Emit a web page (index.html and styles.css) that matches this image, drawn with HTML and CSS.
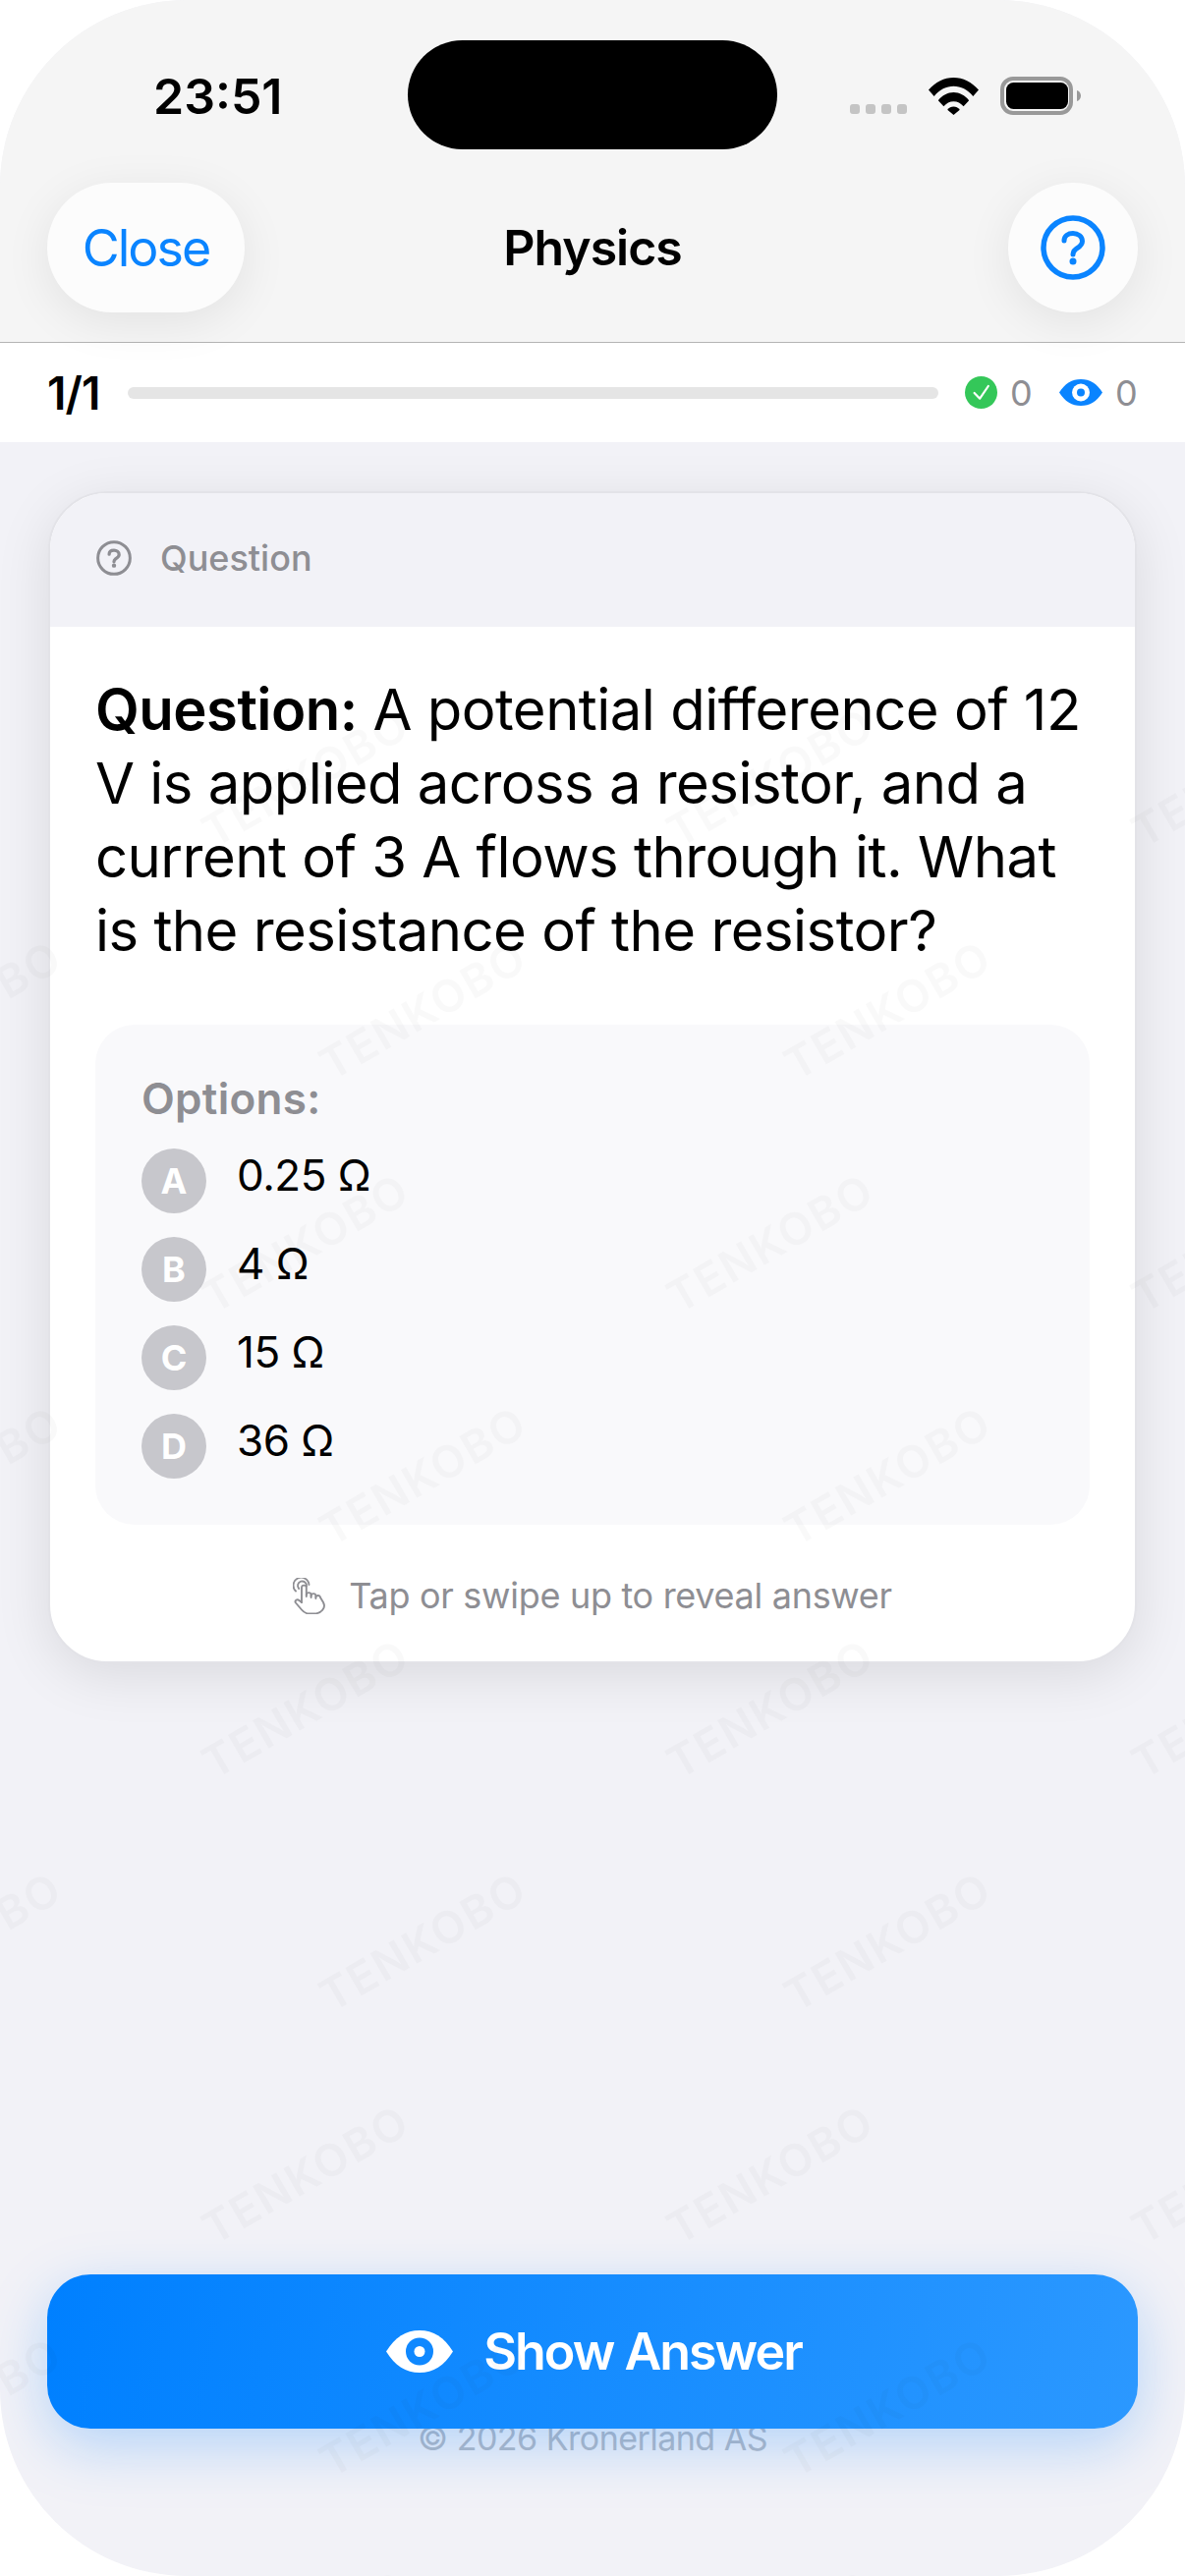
FILE: index.html
```html
<!DOCTYPE html>
<html lang="en">
<head>
    <meta charset="UTF-8">
    <meta name="viewport" content="width=device-width, initial-scale=1.0">
    <title>Physics</title>
    <link rel="stylesheet" href="styles.css">
</head>
<body>

<div class="phone">
    <header class="nav">
        <div class="status-bar">
            <span class="time">23:51</span>
            <div class="island"></div>
            <div class="status-icons">
                <div class="signal"><i></i><i></i><i></i><i></i></div>
                <svg class="wifi" viewBox="0 0 51 38">
                    <path d="M0 12.5C7 4.5 16 0 25.5 0S44 4.5 51 12.5L45.3 19C39.7 12.3 33 8.8 25.5 8.8S11.300 12.3 5.700 19Z"/>
                    <path d="M9.800 23.200C14 18 19.500 15 25.500 15S37 18 41.200 23.200L35.600 29.300C32.800 26 29.500 24.200 25.500 24.200S18.200 26 15.400 29.300Z"/>
                    <path d="M19.200 32.800C21 30.600 23 29.500 25.500 29.500S30 30.600 31.800 32.800L25.500 38Z"/>
                </svg>
                <svg class="battery" viewBox="0 0 82 39">
                    <rect x="2" y="2" width="70" height="35" rx="11" fill="none" stroke="#999" stroke-width="4"/>
                    <rect x="6" y="6" width="63" height="27" rx="7.500" fill="#000"/>
                    <path d="M78 14c2.500.8 4 3 4 5.500S80.500 24.200 78 25Z" fill="#999"/>
                </svg>
            </div>
        </div>
        <div class="nav-row">
            <button class="nav-btn close-btn">Close</button>
            <h1 class="nav-title">Physics</h1>
            <button class="nav-btn help-btn">
                <svg class="q-icon help-icon" viewBox="0 0 66 66">
                    <circle cx="33" cy="33" r="30" fill="none" stroke="currentColor" stroke-width="5.500"/>
                    <path d="M24 26C24 21 28 18.500 33 18.500S42.500 21.500 42.500 26.500C42.500 31 39 32.500 36 34.500C34 36 33 37.500 33 40" fill="none" stroke="currentColor" stroke-width="5" stroke-linecap="round"/>
                    <circle cx="33" cy="47" r="3.500" fill="currentColor"/>
                </svg>
            </button>
        </div>
    </header>

    <div class="progress-row">
        <span class="progress-count">1/1</span>
        <div class="progress-bar"></div>
        <div class="stats">
            <svg class="check-icon" viewBox="0 0 33 33">
                <circle cx="16.500" cy="16.500" r="16.500" fill="#34c759"/>
                <path d="M9.600 17L15.200 22.700L23.800 10" fill="none" stroke="#fff" stroke-width="2.200" stroke-linecap="round" stroke-linejoin="round"/>
            </svg>
            <span class="stat-num">0</span>
            <svg class="stat-eye" viewBox="0 0 44 27">
                <path d="M0 13.500C6 4 13 0 22 0S38 4 44 13.500C38 23 31 27 22 27S6 23 0 13.500Z" fill="#0a84ff"/>
                <circle cx="22" cy="13.500" r="9" fill="#fff"/>
                <circle cx="22" cy="13.500" r="4" fill="#0a84ff"/>
            </svg>
            <span class="stat-num">0</span>
        </div>
    </div>

    <main class="content">
        <section class="card">
            <div class="card-header">
                <svg class="q-icon header-icon" viewBox="0 0 66 66">
                    <circle cx="33" cy="33" r="30" fill="none" stroke="currentColor" stroke-width="5.500"/>
                    <path d="M24 26C24 21 28 18.500 33 18.500S42.500 21.500 42.500 26.500C42.500 31 39 32.500 36 34.500C34 36 33 37.500 33 40" fill="none" stroke="currentColor" stroke-width="6" stroke-linecap="round"/>
                    <circle cx="33" cy="47" r="4" fill="currentColor"/>
                </svg>
                <span>Question</span>
            </div>
            <div class="card-body">
                <p class="question"><strong>Question:</strong> A potential difference of 12 V is applied across a resistor, and a current of 3 A flows through it. What is the resistance of the resistor?</p>
                <div class="options">
                    <div class="options-label">Options:</div>
                    <div class="option"><span class="badge">A</span><span class="option-text">0.25 Ω</span></div>
                    <div class="option"><span class="badge">B</span><span class="option-text">4 Ω</span></div>
                    <div class="option"><span class="badge">C</span><span class="option-text">15 Ω</span></div>
                    <div class="option"><span class="badge">D</span><span class="option-text">36 Ω</span></div>
                </div>
                <div class="hint">
                    <svg class="hand-icon" viewBox="0 0 33 37">
                        <path d="M3 13.500A8 8 0 1 1 16.500 7"/>
                        <path d="M6.200 11A4.500 4.500 0 1 1 14 8.500"/>
                        <path d="M9 25V10a2.400 2.400 0 0 1 4.800 0V19"/>
                        <path d="M13.800 17.500a2.400 2.400 0 0 1 4.800 0V20"/>
                        <path d="M18.600 18.500a2.400 2.400 0 0 1 4.800 0V21"/>
                        <path d="M23.400 19.500a2.400 2.400 0 0 1 4.600 .5L31 25C32.500 28 32 31 30 33C28 35.500 25 36.500 21 36.500H17C13.500 36.500 11 35 9 32.500L3 25.500C1.500 23.500 4.200 21 6.500 23L9 25"/>
                    </svg>
                    <span>Tap or swipe up to reveal answer</span>
                </div>
            </div>
        </section>

        <div class="footer">
            <button class="show-btn">
                <svg class="show-eye" viewBox="0 0 68 43">
                    <path d="M0 21.500C9 7 20 0 34 0S59 7 68 21.500C59 36 48 43 34 43S9 36 0 21.500Z" fill="#fff"/>
                    <circle cx="34" cy="21.500" r="14" fill="#0f88ff"/>
                    <circle cx="34" cy="21.500" r="5.500" fill="#fff"/>
                </svg>
                <span>Show Answer</span>
            </button>
            <div class="copyright">© 2026 Kronerland AS</div>
        </div>
    </main>

    <!-- marca de agua repetida -->
    <svg class="watermark">
        <defs>
            <pattern id="wm" x="150" y="-188" width="473" height="474" patternUnits="userSpaceOnUse">
                <text x="161" y="341" transform="rotate(-30 161 341)">TENKOBO</text>
                <text x="280.500" y="104" transform="rotate(-30 280.500 104)">TENKOBO</text>
            </pattern>
        </defs>
        <rect width="100%" height="100%" fill="url(#wm)"/>
    </svg>
</div>

</body>
</html>
```

FILE: styles.css
```css
* {
    box-sizing: border-box;
}
html, body {
    margin: 0;
    background-color: #fff;
}
body {
    font-family: Inter, "Liberation Sans", sans-serif;
    color: #000;
}
button {
    font-family: inherit;
    border: none;
    padding: 0;
}
.phone {
    position: relative;
    width: 1206px;
    height: 2622px;
    display: flex;
    flex-direction: column;
    background-color: #f2f2f7;
    border-radius: 190px;
    overflow: hidden;
}

/* nav */
.nav {
    position: relative;
    z-index: 1;
    height: 349px;
    padding-top: 41px;
    background-color: #f5f5f5;
    border-bottom: 1px solid #b4b4b4;
}
.status-bar {
    display: flex;
    align-items: center;
    height: 111px;
    padding-left: 156px;
}
.time {
    width: 259px;
    font-size: 50px;
    font-weight: 600;
    line-height: 60px;
    padding-top: 3px;
}
.island {
    width: 376px;
    height: 111px;
    background-color: #000;
    border-radius: 56px;
}
.status-icons {
    display: flex;
    align-items: flex-end;
    margin-left: 74px;
    height: 40px;
    margin-top: 2px;
}
.signal {
    display: flex;
    gap: 6px;
    margin-right: 22px;
    margin-bottom: 2px;
}
.signal i {
    width: 10px;
    height: 10px;
    border-radius: 3px;
    background-color: #c4c4c4;
}
.wifi {
    width: 51px;
    height: 38px;
    margin-right: 22px;
    margin-bottom: 1px;
}
.battery {
    width: 82px;
    height: 39px;
    margin-bottom: 1px;
}
.nav-row {
    display: grid;
    grid-template-columns: 1fr auto 1fr;
    align-items: center;
    height: 132px;
    margin-top: 34px;
    padding: 0 48px;
}
.nav-btn {
    height: 132px;
    border-radius: 66px;
    background-color: #fcfcfc;
    box-shadow: 0 10px 48px rgba(0, 0, 0, 0.08);
    color: #0a84ff;
}
.close-btn {
    width: 201px;
    font-size: 52px;
    letter-spacing: -2px;
    justify-self: start;
}
.help-btn {
    width: 132px;
    justify-self: end;
    display: flex;
    align-items: center;
    justify-content: center;
}
.help-icon {
    width: 66px;
    height: 66px;
}
.nav-title {
    margin: 0;
    font-size: 50px;
    font-weight: 600;
    letter-spacing: -1px;
}

/* progress */
.progress-row {
    display: flex;
    align-items: center;
    height: 101px;
    padding-left: 48px;
    background-color: #fff;
}
.progress-count {
    width: 82px;
    font-size: 46px;
    font-weight: 600;
    letter-spacing: -1px;
}
.progress-bar {
    flex: none;
    width: 825px;
    height: 12px;
    border-radius: 6px;
    background-color: #e5e5e5;
}
.stats {
    display: flex;
    align-items: center;
    margin-left: 27px;
}
.check-icon {
    width: 33px;
    height: 33px;
}
.stat-num {
    width: 22px;
    margin-left: 13px;
    font-size: 36px;
    color: #8e8e93;
}
.stat-eye {
    width: 44px;
    height: 27px;
    margin-left: 28px;
}

/* card */
.content {
    flex: 1;
    display: flex;
    flex-direction: column;
    padding: 50px 48px 120px;
}
.card {
    margin: 0 1px;
    background-color: #fff;
    border: 2px solid #e3e3e8;
    border-radius: 60px;
    overflow: hidden;
    box-shadow: 0 12px 56px rgba(0, 0, 0, 0.1);
}
.card-header {
    display: flex;
    align-items: center;
    gap: 29px;
    height: 136px;
    padding: 0 47px 4px;
    background-color: #f2f2f7;
    font-size: 36px;
    font-weight: 500;
    color: #8e8e93;
}
.q-icon {
    display: block;
}
.header-icon {
    width: 36px;
    height: 36px;
}
.card-body {
    padding: 47px 46px 47px;
}
.question {
    margin: 0;
    font-size: 58px;
    line-height: 75px;
    letter-spacing: -0.530px;
}
.question strong {
    font-weight: 600;
}
.options {
    margin-top: 58px;
    padding: 50px 47px 47px;
    background-color: #f9f9fb;
    border-radius: 40px;
}
.options-label {
    margin-bottom: 26px;
    font-size: 44px;
    font-weight: 600;
    line-height: 50px;
    letter-spacing: 0.300px;
    color: #8e8e93;
}
.option {
    display: flex;
    align-items: center;
    gap: 31px;
    margin-bottom: 24px;
}
.option:last-child {
    margin-bottom: 0;
}
.badge {
    width: 66px;
    height: 66px;
    display: flex;
    align-items: center;
    justify-content: center;
    border-radius: 50%;
    background-color: #c7c7cc;
    color: #fff;
    font-size: 36px;
    font-weight: 700;
}
.option-text {
    margin-bottom: 12px;
    font-size: 44px;
    line-height: 54px;
    letter-spacing: -0.500px;
}
.hint {
    display: flex;
    align-items: center;
    justify-content: center;
    gap: 24px;
    margin-top: 52px;
    height: 40px;
    font-size: 36px;
    letter-spacing: -0.300px;
    color: #8e8e93;
}
.hand-icon {
    width: 33px;
    height: 37px;
    fill: none;
    stroke: #8e8e93;
    stroke-width: 1.900;
    stroke-linecap: round;
    stroke-linejoin: round;
}

/* bottom */
.footer {
    margin-top: auto;
}
.show-btn {
    position: relative;
    z-index: 1;
    width: 100%;
    height: 157px;
    display: flex;
    align-items: center;
    justify-content: center;
    gap: 31px;
    padding-left: 3px;
    border-radius: 44px;
    background: linear-gradient(100deg, #0080ff, #2b98ff);
    box-shadow: 0 18px 60px rgba(0, 122, 255, 0.26);
    color: #fff;
    font-size: 52px;
    font-weight: 600;
    letter-spacing: -2px;
}
.show-eye {
    width: 68px;
    height: 43px;
}
.copyright {
    margin-top: -10px;
    text-align: center;
    font-size: 34px;
    line-height: 40px;
    letter-spacing: -0.500px;
    color: #b6bac4;
}

/* watermark */
.watermark {
    position: absolute;
    left: 0;
    top: 638px;
    width: 1206px;
    height: 1984px;
    z-index: 2;
    pointer-events: none;
}
.watermark text {
    font-family: Inter, sans-serif;
    font-size: 45px;
    font-weight: 600;
    letter-spacing: 2px;
    text-anchor: middle;
    dominant-baseline: central;
    fill: rgba(0, 0, 0, 0.025);
}
```
